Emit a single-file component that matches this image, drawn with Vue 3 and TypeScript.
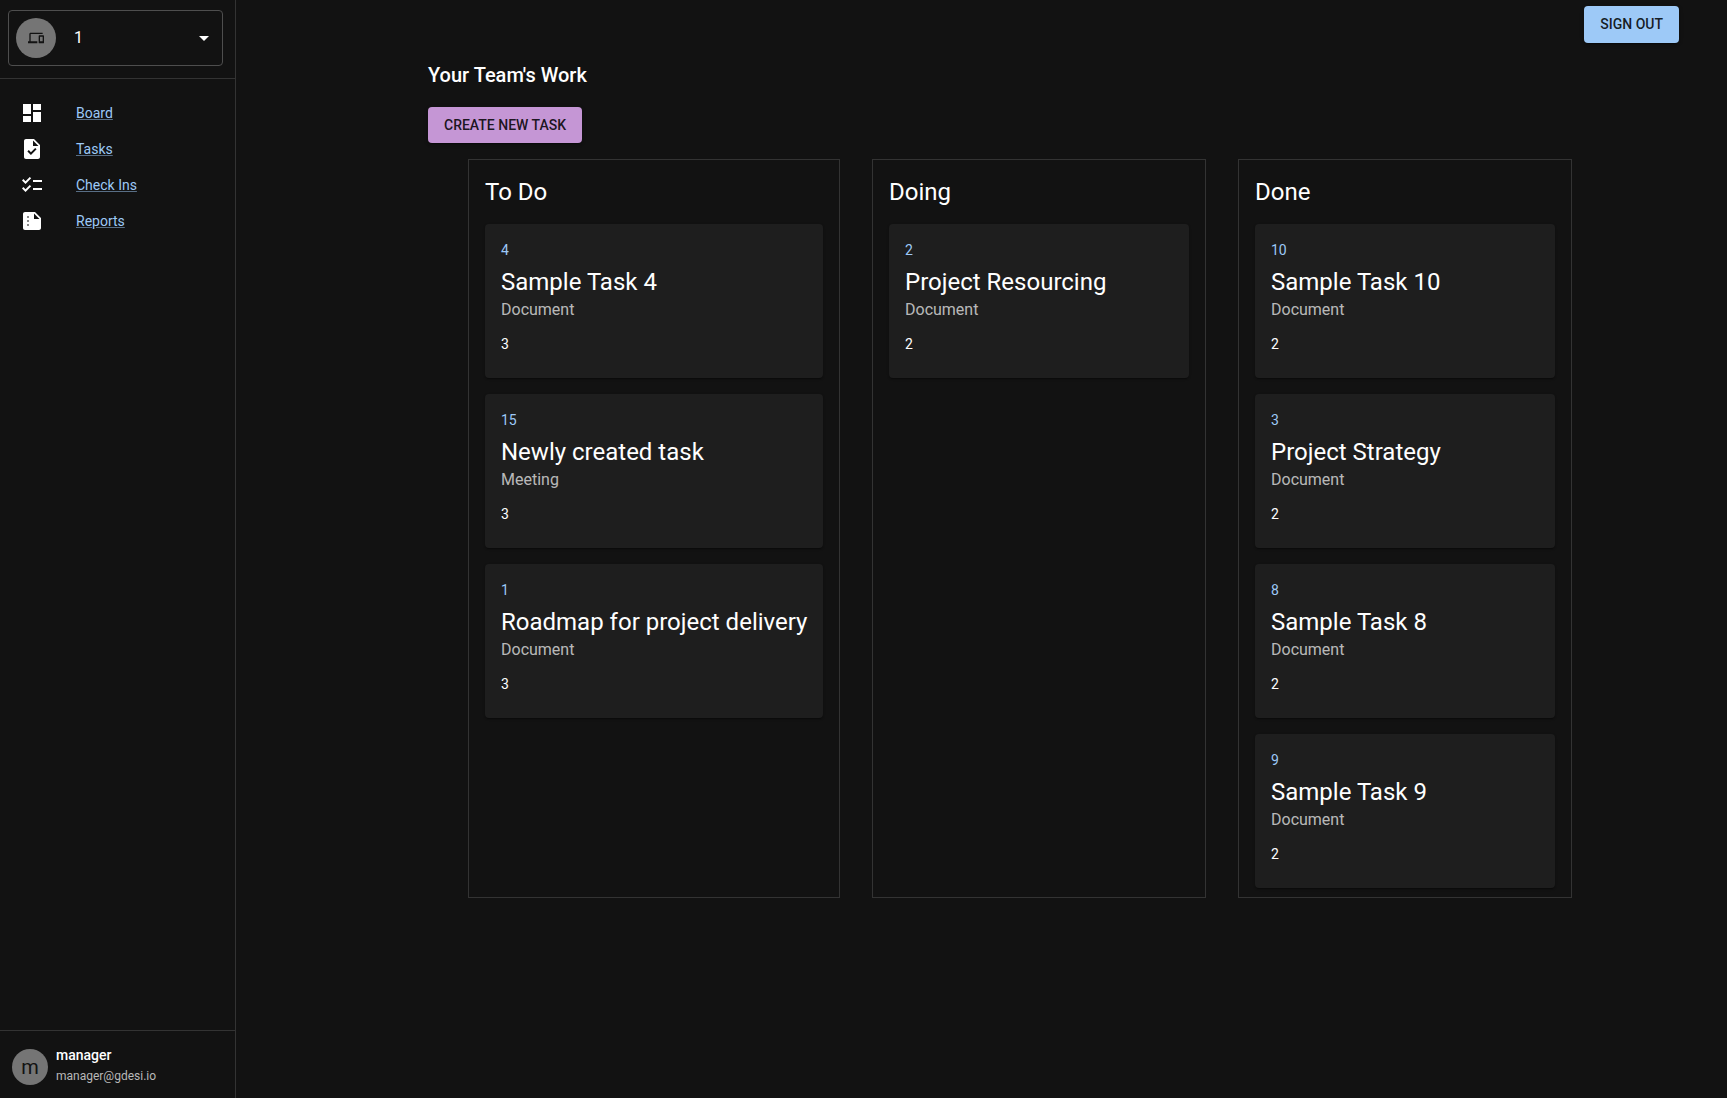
<script setup lang="ts">
interface Task { id: number; title: string; type: string; owner: number }
interface Column { name: string; width: number; tasks: Task[] }

const links: { label: string; icon: string; detail?: string }[] = [
  { label: 'Board', icon: 'M3 13h8V3H3v10zm0 8h8v-6H3v6zm10 0h8V11h-8v10zm0-18v6h8V3h-8z' },
  { label: 'Tasks', icon: 'M14 2H6c-1.1 0-1.99.9-1.99 2L4 20c0 1.1.89 2 1.99 2H18c1.1 0 2-.9 2-2V8l-6-6zm-3.06 16L7.4 14.46l1.41-1.41 2.12 2.12 4.24-4.24 1.41 1.41L10.94 18zM13 9V3.5L18.5 9H13z' },
  { label: 'Check Ins', icon: 'M22 7h-9v2h9V7zm0 8h-9v2h9v-2zM5.54 11 2 7.46l1.41-1.41 2.12 2.12 4.24-4.24 1.41 1.41L5.54 11zm0 8L2 15.46l1.41-1.41 2.12 2.12 4.24-4.24 1.41 1.41L5.54 19z' },
  {
    label: 'Reports',
    icon: 'M15 3H5c-1.1 0-1.99.9-1.99 2L3 19c0 1.1.89 2 1.99 2H19c1.1 0 2-.9 2-2V9l-6-6zm-1 7V4.5l5.5 5.5H14z',
    detail: 'M7 7h2v2H7zM7 11h2v2H7zM7 15h2v2H7z',
  },
]

const columns: Column[] = [
  { name: 'To Do', width: 372, tasks: [
    { id: 4, title: 'Sample Task 4', type: 'Document', owner: 3 },
    { id: 15, title: 'Newly created task', type: 'Meeting', owner: 3 },
    { id: 1, title: 'Roadmap for project delivery', type: 'Document', owner: 3 },
  ] },
  { name: 'Doing', width: 334, tasks: [
    { id: 2, title: 'Project Resourcing', type: 'Document', owner: 2 },
  ] },
  { name: 'Done', width: 334, tasks: [
    { id: 10, title: 'Sample Task 10', type: 'Document', owner: 2 },
    { id: 3, title: 'Project Strategy', type: 'Document', owner: 2 },
    { id: 8, title: 'Sample Task 8', type: 'Document', owner: 2 },
    { id: 9, title: 'Sample Task 9', type: 'Document', owner: 2 },
  ] },
]
</script>

<template>
  <div class="app">
    <aside class="sidebar">
      <div class="picker-wrap">
        <div class="picker">
          <span class="avatar picker-avatar">
            <svg width="16" height="16" viewBox="0 0 24 24" fill="currentColor"><path d="M4 6h18V4H4c-1.1 0-2 .9-2 2v11H0v3h14v-3H4V6zm19 2h-6c-.55 0-1 .45-1 1v10c0 .55.45 1 1 1h6c.55 0 1-.45 1-1V9c0-.55-.45-1-1-1zm-1 9h-4v-7h4v7z" /></svg>
          </span>
          <span class="picker-value">1</span>
          <svg width="24" height="24" viewBox="0 0 24 24" fill="#fff"><path d="M7 10l5 5 5-5z" /></svg>
        </div>
      </div>
      <nav class="nav">
        <div v-for="link in links" :key="link.label" class="nav-row">
          <svg width="24" height="24" viewBox="0 0 24 24" fill="#fff">
            <path :d="link.icon" />
            <path v-if="link.detail" :d="link.detail" fill="#8a8a8a" />
          </svg>
          <a href="#">{{ link.label }}</a>
        </div>
      </nav>
      <footer class="user">
        <span class="avatar user-avatar">m</span>
        <div class="user-text">
          <div class="user-name">manager</div>
          <div class="user-mail">manager@gdesi.io</div>
        </div>
      </footer>
    </aside>

    <main class="main">
      <header class="top"><button class="btn sign-out">SIGN OUT</button></header>
      <section class="work">
        <h1>Your Team's Work</h1>
        <button class="btn create">CREATE NEW TASK</button>
        <div class="board">
          <section v-for="col in columns" :key="col.name" class="column" :style="{ width: col.width + 'px' }">
            <h2>{{ col.name }}</h2>
            <article v-for="task in col.tasks" :key="task.id" class="card">
              <div class="card-id">{{ task.id }}</div>
              <div class="card-title">{{ task.title }}</div>
              <div class="card-type">{{ task.type }}</div>
              <div class="card-owner">{{ task.owner }}</div>
            </article>
          </section>
        </div>
      </section>
    </main>
  </div>
</template>

<style>
body { margin: 0; background: #121212; }
</style>

<style scoped>
.app, .app * { box-sizing: border-box; }
.app {
  display: flex;
  height: 100vh;
  overflow: hidden;
  background: #121212;
  color: #fff;
  font-family: Roboto, "Liberation Sans", sans-serif;
  -webkit-font-smoothing: antialiased;
}
svg { display: block; flex: none; }
.sidebar {
  display: flex;
  flex-direction: column;
  flex: none;
  width: 236px;
  border-right: 1px solid #333;
}
.picker-wrap { height: 79px; padding: 10px 12px 0 8px; border-bottom: 1px solid #333; }
.picker {
  display: flex;
  align-items: center;
  height: 56px;
  padding: 0 6px 0 7px;
  border: 1px solid #4e4e4e;
  border-radius: 4px;
}
.avatar {
  display: flex;
  align-items: center;
  justify-content: center;
  flex: none;
  border-radius: 50%;
  background: #757575;
  color: #121212;
}
.picker-avatar { width: 40px; height: 40px; }
.picker-value { flex: 1; margin-left: 18px; font-size: 16px; line-height: 24px; }
.nav { padding-top: 16px; }
.nav-row { display: flex; align-items: center; height: 36px; padding-left: 20px; }
.nav-row a {
  margin-left: 32px;
  font-size: 14px;
  line-height: 20px;
  color: #9dc9f7;
  text-decoration: underline;
  text-decoration-color: rgba(157, 201, 247, 0.5);
}
.user {
  display: flex;
  align-items: center;
  height: 68px;
  margin-top: auto;
  padding: 5px 0 0 12px;
  border-top: 1px solid #333;
}
.user-avatar { width: 36px; height: 36px; font-size: 20px; line-height: 20px; }
.user-text { margin: 0 0 4px 8px; }
.user-name { font-size: 14px; font-weight: 500; line-height: 22px; }
.user-mail { font-size: 12px; line-height: 20px; color: #b8b8b8; }
.main { flex: 1; min-width: 0; }
.top { display: flex; justify-content: flex-end; height: 59px; padding: 6px 48px 0 0; }
.btn {
  display: block;
  border: 0;
  padding: 6px 16px;
  border-radius: 4px;
  font: 500 14px/24.5px Roboto, "Liberation Sans", sans-serif;
  color: rgba(0, 0, 0, 0.87);
  white-space: nowrap;
  box-shadow: 0 3px 1px -2px rgba(0, 0, 0, 0.2), 0 2px 2px rgba(0, 0, 0, 0.14), 0 1px 5px rgba(0, 0, 0, 0.12);
}
.sign-out { height: 37px; background: #9dc9f7; }
.create { height: 36px; line-height: 24px; background: #c596d5; }
.work { padding-left: 192px; }
h1 { margin: 0 0 16px; font-size: 20px; font-weight: 500; line-height: 32px; }
.board { display: flex; gap: 32px; height: 739px; margin: 16px 0 0 40px; }
.column { flex: none; padding: 16px; border: 1px solid #333; }
h2 { margin: 0 0 16px; font-size: 24px; font-weight: 400; line-height: 32px; }
.card {
  height: 154px;
  margin-bottom: 16px;
  padding: 16px;
  border-radius: 4px;
  background: #1e1e1e;
  box-shadow: 0 2px 1px -1px rgba(0, 0, 0, 0.2), 0 1px 1px rgba(0, 0, 0, 0.14), 0 1px 3px rgba(0, 0, 0, 0.12);
}
.card-id { margin-bottom: 6px; font-size: 14px; line-height: 20px; color: #9dc9f7; }
.card-title { font-size: 24px; line-height: 32px; white-space: nowrap; }
.card-type { margin-bottom: 12px; font-size: 16px; line-height: 24px; color: rgba(255, 255, 255, 0.7); }
.card-owner { font-size: 14px; line-height: 20px; }
</style>
